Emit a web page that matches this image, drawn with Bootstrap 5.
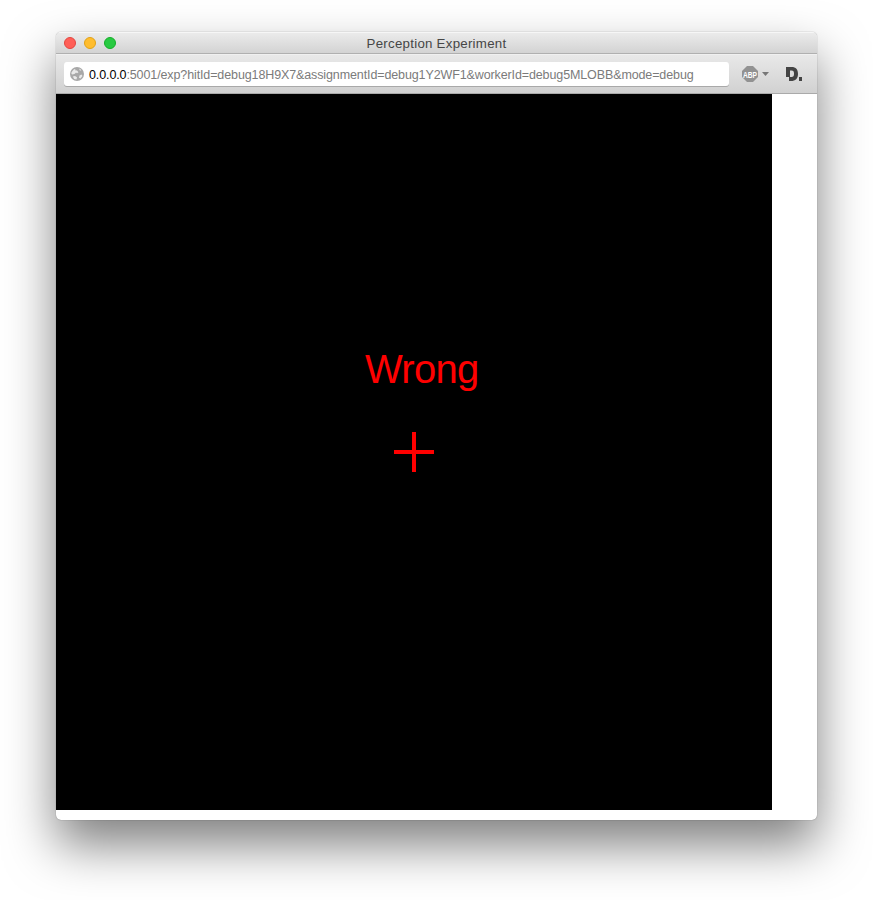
<!DOCTYPE html>
<html lang="en">
<head>
<meta charset="utf-8">
<meta name="viewport" content="width=device-width, initial-scale=1">
<title>Perception Experiment</title>
<link href="https://cdn.jsdelivr.net/npm/bootstrap@5.3.0/dist/css/bootstrap.min.css" rel="stylesheet">
<style>
body{background:#fff;font-family:"Liberation Sans",Arial,sans-serif;height:900px;padding:32px 56px 80px;}
.browser{width:761px;height:788px;border-radius:5px;box-shadow:0 0 1px rgba(0,0,0,.55),0 25px 50px rgba(0,0,0,.5);}
.titlebar{height:22px;background:linear-gradient(#ececec,#d3d3d3);border-bottom:1px solid #b0b0b0;box-shadow:inset 0 1px #f6f6f6;display:grid;grid-template-columns:1fr auto 1fr;padding:0 8px;}
.light{width:12px;height:12px;border-radius:50%;border:1px solid}
.light-close{background:#ff5f57;border-color:#e2463f}
.light-min{background:#ffbd2e;border-color:#e1a116}
.light-zoom{background:#28ca42;border-color:#14ae28}
.win-title{font-size:13.3px;line-height:24px;height:21px;color:#464646;letter-spacing:.25px;white-space:nowrap}
.toolbar{height:40px;background:linear-gradient(#e9e9e9,#d1d1d1);border-bottom:1px solid #aaa;box-shadow:inset 0 1px #f0f0f0;padding:0 15px 0 8px}
.address{width:665px;height:24px;border-radius:3px;padding-left:6px;box-shadow:0 1px #a9a9a9;white-space:nowrap}
.url{font-size:12.5px;line-height:24px;color:#7b7b7b;margin-left:5px;padding-top:2px;letter-spacing:-.115px}
.url b{font-weight:400;color:#000}
.stage{width:716px;height:716px;background:#000;color:red;padding-top:252px}
.verdict{font-size:40px;line-height:46px;margin-left:309px;letter-spacing:-.7px}
.cross{margin:40px 0 0 338px}
</style>
</head>
<body>
<main class="browser bg-white overflow-hidden">
  <header class="titlebar">
    <div class="d-flex align-items-center gap-2">
      <span class="light light-close"></span><span class="light light-min"></span><span class="light light-zoom"></span>
    </div>
    <div class="win-title">Perception Experiment</div>
  </header>
  <nav class="toolbar d-flex align-items-center">
    <div class="address bg-white d-flex align-items-center">
      <svg width="14" height="14" viewBox="0 0 14 14" class="flex-shrink-0">
        <circle cx="7" cy="7" r="7" fill="#a8a8a8"/>
        <path d="M2.500 4 4 2.200 5.500 2 5 3.300 7 3.600 8.500 5.200 7 6.200 6 5.600 4.500 7 2 7.500 1.200 6ZM9 1.500 11.500 3 10 3.700ZM2.800 9.500 5 9 7 10.200 6.500 12.500 4.200 12ZM9.500 8.500 11.500 7.500 12.500 9 10.500 11.500 9 10.800Z" fill="#e9e9e9"/>
      </svg>
      <div class="url"><b>0.0.0.0</b>:5001/exp?hitId=debug18H9X7&amp;assignmentId=debug1Y2WF1&amp;workerId=debug5MLOBB&amp;mode=debug</div>
    </div>
    <div class="d-flex align-items-center ms-auto">
      <svg width="28" height="16" viewBox="0 0 28 16">
        <path d="M5 0h6l5 5v6l-5 5H5L0 11V5Z" fill="#929292"/>
        <text x="1" y="11.500" font-family="Liberation Sans, sans-serif" font-size="9" font-weight="700" fill="#fff" textLength="14" lengthAdjust="spacingAndGlyphs">ABP</text>
        <path d="M20 6h7l-3.500 4Z" fill="#777"/>
      </svg>
      <svg width="16" height="14" viewBox="0 0 16 14" class="ms-3">
        <path fill="#444" fill-rule="evenodd" d="M0 0h5.500C10 0 12 2.500 12 7s-2.500 7-7 7H3v-4H0ZM4 3.500V10h1.500c1.900 0 2.500-1.100 2.500-3.300S7.400 3.500 5.500 3.500ZM13 10h3v4h-3Z"/>
      </svg>
    </div>
  </nav>
  <section class="stage">
    <div class="verdict">Wrong</div>
    <svg class="cross d-block" width="40" height="40" viewBox="0 0 40 40"><path d="M18 0h4v18h18v4H22v18h-4V22H0v-4h18Z" fill="red"/></svg>
  </section>
</main>
<script src="https://cdn.jsdelivr.net/npm/bootstrap@5.3.0/dist/js/bootstrap.bundle.min.js"></script>
</body>
</html>
